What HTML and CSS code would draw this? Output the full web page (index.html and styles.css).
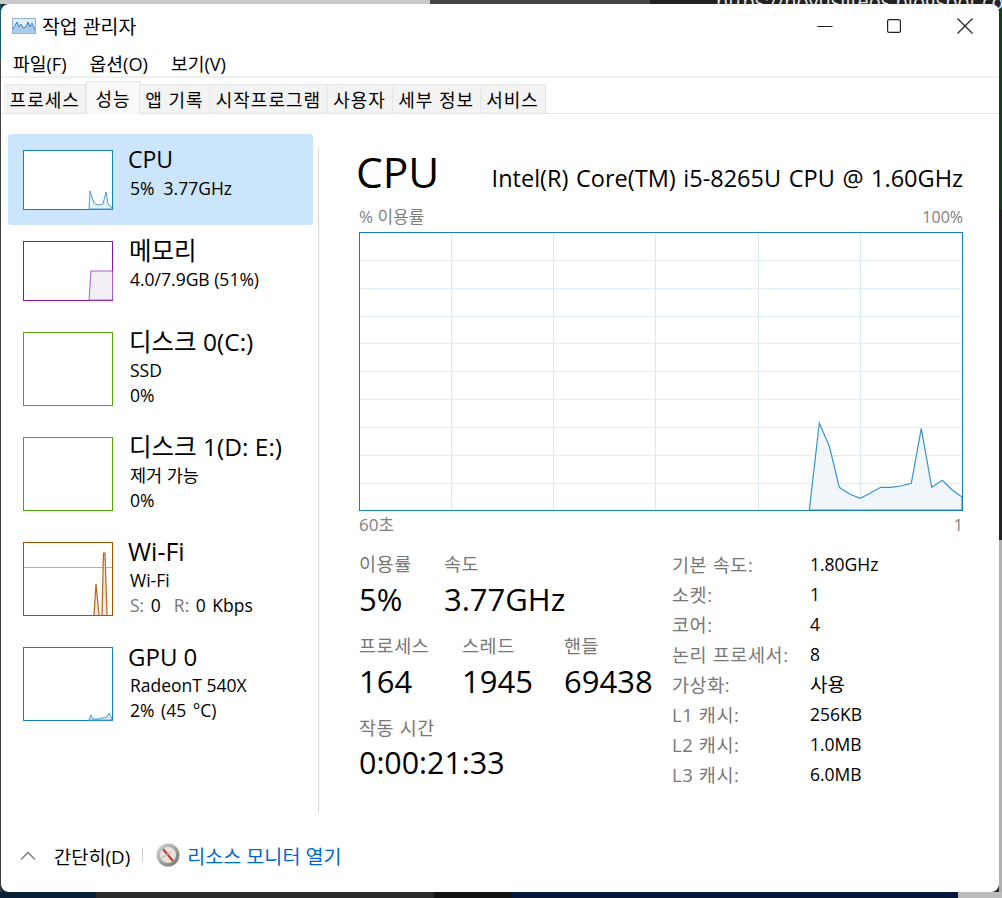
FILE: index.html
```html
<!DOCTYPE html>
<html lang="ko">
<head>
<meta charset="utf-8">
<title>작업 관리자</title>
<link rel="stylesheet" href="styles.css">
</head>
<body>
<div class="desktop">
<span class="behind-url">https://noyusliteos.blogspot.co</span>
<div class="window">
  <header class="titlebar">
    <svg class="app-icon" width="24" height="16" viewBox="0 0 24 16"><rect x="0.5" y="0.5" width="23" height="15" fill="#e4eef8" stroke="#8fb4d8"/><path d="M1 15V11L5 4L7 9L9 6L11 10L14 9L16 4L18 9L20 5L23 12V15H1Z" fill="#a6cdee"/><path d="M1 11L5 4L7 9L9 6L11 10L14 9L16 4L18 9L20 5L23 12" fill="none" stroke="#3f7fbf"/></svg>
    <span class="app-title">작업 관리자</span>
    <div class="win-controls">
      <svg width="16" height="16" viewBox="0 0 16 16"><path d="M0.500 8.500H15.500" stroke="#222" stroke-width="1.200"/></svg>
      <svg class="max-btn" width="14" height="14" viewBox="0 0 14 14"><rect x="0.6" y="0.6" width="12.800" height="12.800" rx="1.500" fill="none" stroke="#222" stroke-width="1.200"/></svg>
      <svg width="16" height="16" viewBox="0 0 16 16"><path d="M0.500 0.500L15.500 15.500M15.500 0.500L0.500 15.500" stroke="#222" stroke-width="1.200"/></svg>
    </div>
  </header>
  <nav class="menubar"><span>파일(F)</span><span>옵션(O)</span><span>보기(V)</span></nav>
  <nav class="tabs">
    <span class="tab">프로세스</span><span class="tab active">성능</span><span class="tab">앱 기록</span><span class="tab">시작프로그램</span><span class="tab">사용자</span><span class="tab">세부 정보</span><span class="tab">서비스</span>
  </nav>
  <main class="main">
    <aside class="sidebar">
      <div class="item selected">
        <svg class="thumb short" viewBox="0 0 90 60"><rect x="0.5" y="0.5" width="89" height="59" fill="#fff" stroke="#117dbb"/><path d="M66 59L67 41L71 53L75 55L80 54L83 42L85 54L89 58V59Z" fill="#e6f1f8" stroke="#4a9ccf"/></svg>
        <div class="info"><div class="name latin cpu-name">CPU</div><div class="sub">5%&nbsp; 3.77GHz</div></div>
      </div>
      <div class="item">
        <svg class="thumb short" viewBox="0 0 90 60"><rect x="0.5" y="0.5" width="89" height="59" fill="#fff" stroke="#8b12ae"/><path d="M66 59L68 30H89.500V59Z" fill="#f2f0f4" stroke="#a85cc4"/></svg>
        <div class="info"><div class="name">메모리</div><div class="sub">4.0/7.9GB (51%)</div></div>
      </div>
      <div class="item tall">
        <svg class="thumb" viewBox="0 0 90 74"><rect x="0.5" y="0.5" width="89" height="73" fill="#fff" stroke="#4da60c"/></svg>
        <div class="info"><div class="name">디스크 0(C:)</div><div class="sub">SSD</div><div class="sub">0%</div></div>
      </div>
      <div class="item tall">
        <svg class="thumb" viewBox="0 0 90 74"><rect x="0.5" y="0.5" width="89" height="73" fill="#fff" stroke="#4da60c"/></svg>
        <div class="info"><div class="name">디스크 1(D: E:)</div><div class="sub">제거 가능</div><div class="sub">0%</div></div>
      </div>
      <div class="item tall">
        <svg class="thumb" viewBox="0 0 90 74"><rect x="0.5" y="0.5" width="89" height="73" fill="#fff" stroke="#a74f01"/><path d="M1 25.500H89" stroke="#d8a878"/><path d="M71 73L73 42L76 73M79 73L80.500 11L82 11L84 73" fill="#f9e8da" stroke="#b5651d" stroke-width="1.200"/></svg>
        <div class="info"><div class="name latin">Wi-Fi</div><div class="sub">Wi-Fi</div><div class="sub spaced"><span class="dim">S:</span> 0&nbsp; <span class="dim">R:</span> 0 Kbps</div></div>
      </div>
      <div class="item tall">
        <svg class="thumb" viewBox="0 0 90 74"><rect x="0.5" y="0.5" width="89" height="73" fill="#fff" stroke="#117dbb"/><path d="M66 73L68 68L70 72H76L78 71H81L84 70L86 66L88 70L89 73Z" fill="#e6f1f8" stroke="#4a9ccf"/></svg>
        <div class="info"><div class="name latin gpu-name">GPU 0</div><div class="sub">RadeonT 540X</div><div class="sub spaced">2% (45 °C)</div></div>
      </div>
    </aside>
    <section class="detail">
      <div class="heading"><h1>CPU</h1><div class="model">Intel(R) Core(TM) i5-8265U CPU @ 1.60GHz</div></div>
      <div class="axis top"><span class="axis-ko">% 이용률</span><span>100%</span></div>
      <svg class="graph" width="604" height="279" viewBox="0 0 604 279">
        <rect x="0" y="0" width="604" height="279" fill="#fff"/>
        <path d="M1 28.500H603M1 56.500H603M1 84.500H603M1 111.500H603M1 139.500H603M1 167.500H603M1 195.500H603M1 223.500H603M1 251.500H603" stroke="#e3ecf2"/>
        <path d="M92.500 1V278M194.500 1V278M296.500 1V278M399.500 1V278M501.500 1V278" stroke="#d9e9f3"/>
        <path d="M450.300 278L460.300 191.300L470.300 214L480.300 255.300L491 262.300L501.300 266.300L511 261.300L521.700 255.300L531.700 255.300L541.700 254L552.300 251.300L562.300 196.300L572.700 255.300L583.300 248.300L593.300 258L603 265V278Z" fill="#f1f6fa" stroke="#3a93c9" stroke-width="1.200"/>
        <rect x="0.5" y="0.5" width="603" height="278" fill="none" stroke="#117dbb"/>
      </svg>
      <div class="axis bottom"><span class="axis-ko">60초</span><span>1</span></div>
      <div class="stats">
        <div class="left-stats">
          <div class="stat-row">
            <div class="stat w-use"><label>이용률</label><b>5%</b></div>
            <div class="stat"><label>속도</label><b>3.77GHz</b></div>
          </div>
          <div class="stat-row">
            <div class="stat w-proc"><label>프로세스</label><b>164</b></div>
            <div class="stat w-thr"><label>스레드</label><b>1945</b></div>
            <div class="stat"><label>핸들</label><b>69438</b></div>
          </div>
          <div class="stat-row">
            <div class="stat"><label>작동 시간</label><b class="uptime">0:00:21:33</b></div>
          </div>
        </div>
        <dl class="specs">
          <dt>기본 속도:</dt><dd>1.80GHz</dd>
          <dt>소켓:</dt><dd>1</dd>
          <dt>코어:</dt><dd>4</dd>
          <dt>논리 프로세서:</dt><dd>8</dd>
          <dt>가상화:</dt><dd class="dd-ko">사용</dd>
          <dt>L1 캐시:</dt><dd>256KB</dd>
          <dt>L2 캐시:</dt><dd>1.0MB</dd>
          <dt>L3 캐시:</dt><dd>6.0MB</dd>
        </dl>
      </div>
    </section>
  </main>
  <footer class="footer">
    <svg class="chev" width="16" height="9" viewBox="0 0 16 9"><path d="M1 8.500L8 1.500L15 8.500" fill="none" stroke="#777" stroke-width="1.300"/></svg>
    <span class="less">간단히(D)</span>
    <span class="sep"></span>
    <svg class="monitor" width="24" height="24" viewBox="0 0 24 24"><defs><linearGradient id="r" x1="0" y1="0" x2="1" y2="1"><stop offset="0" stop-color="#d8d8d8"/><stop offset="1" stop-color="#6e6e6e"/></linearGradient></defs><circle cx="12" cy="12" r="11.500" fill="url(#r)"/><circle cx="12" cy="12" r="8" fill="#e9e2da"/><path d="M7 6L12 12L17 18" stroke="#c9362a" stroke-width="2"/><path d="M6 15L15 9" stroke="#bbb" stroke-width="1.500"/></svg>
    <span class="link">리소스 모니터 열기</span>
  </footer>
</div>
</div>
</body>
</html>
```
FILE: styles.css
```css
* { box-sizing: border-box; }
html, body { margin: 0; height: 100%; overflow: hidden; }
body { font-family: "Open Sans", "Noto Sans CJK KR", sans-serif; color: #000; background: #1c2a33; }
.desktop { position: relative; width: 1002px; height: 898px; padding: 4px 3px 6px 1px; overflow: hidden;
  background:
    linear-gradient(90deg, #c9c9c9 0 430px, #444 430px 650px, #222 650px) top / 100% 4px no-repeat,
    linear-gradient(90deg, #0a2036 0 96px, #2a2a2a 96px 434px, #111 434px 512px, #05173a 512px 958px, #bbb 958px) bottom / 100% 6px no-repeat,
    linear-gradient(#1a5a66 0 60px, #444 60px 400px, #3a3f45 400px) left / 1px 100% no-repeat,
    linear-gradient(#1d3a1d 0 210px, #222 210px 540px, #b0b0b0 540px) right / 3px 100% no-repeat; }
.behind-url { position: absolute; left: 716px; top: -12px; font-size: 20px; color: #e8e8e8; white-space: nowrap; }
.window { position: relative; width: 998px; height: 888px; background: #fff; border-radius: 8px; display: flex; flex-direction: column; overflow: hidden; }
.titlebar { height: 45px; display: flex; align-items: center; padding: 0 0 2px 11px; flex: none; }
.app-icon { margin-right: 6px; }
.app-title { font-size: 19.400px; }
.win-controls { margin-left: auto; display: flex; align-items: center; gap: 54px; padding-right: 26px; }
.max-btn { margin-right: 2px; }
.menubar { height: 29px; display: flex; gap: 23px; align-items: center; padding-left: 12px; font-size: 18.200px; border-bottom: 2px solid #f0f0f0; flex: none; }
.tabs { height: 36px; display: flex; align-items: flex-end; padding-left: 3px; border-bottom: 1px solid #e5e5e5; flex: none; font-size: 18px; letter-spacing: 1px; }
.tab { height: 29px; padding: 0 5.600px; display: flex; align-items: center; background: #f3f3f3; border: 1px solid #e6e6e6; border-bottom: 0; border-left: 0; white-space: nowrap; }
.tab.active { height: 33px; padding: 0 8px; background: #f9f9f9; margin-bottom: -1px; border-left: 1px solid #e6e6e6; }
.main { flex: 1; display: flex; min-height: 0; }
.sidebar { width: 317px; padding: 20px 0 0 7px; flex: none; }
.item { width: 305px; height: 91px; padding: 16px 0 0 15px; display: flex; gap: 15px; border-radius: 3px; }
.item.tall { height: 105px; }
.item.selected { background: #cbe6fc; }
.thumb { width: 90px; height: 74px; flex: none; }
.thumb.short { height: 60px; }
.info { margin-top: -7px; padding-left: 2px; }
.name { font-size: 24.500px; line-height: 33px; white-space: nowrap; margin-left: -1px; }
.latin { margin-left: -2px; font-size: 25px; }
.cpu-name { font-size: 23px; }
.gpu-name { font-size: 24px; }
.sub { font-size: 17.5px; line-height: 25px; white-space: nowrap; }
.spaced { word-spacing: 2px; }
.dim { color: #777; }
.detail { margin: 35px 0 0 0; border-left: 1px solid #d9d9d9; flex: 1; padding: 0 37px 0 38px; height: 664px; }
.heading { display: flex; justify-content: space-between; align-items: center; height: 46px; }
h1 { margin: 0 0 0 -1px; font-size: 42.5px; font-weight: 400; line-height: 46px; }
.model { font-size: 23.5px; word-spacing: 1.500px; white-space: nowrap; margin-top: 12px; }
.axis { display: flex; justify-content: space-between; width: 604px; margin-left: 2px; font-size: 16px; color: #808080; line-height: 20px; }
.axis-ko { font-size: 17px; }
.axis.top { margin-top: 12px; margin-bottom: 5px; }
.axis.bottom { margin-top: 4px; }
.graph { display: block; margin-left: 2px; }
.stats { display: flex; margin-top: 15px; margin-left: 2px; }
.left-stats { width: 313px; flex: none; }
.stat-row { display: flex; height: 82px; }
.stat { display: flex; flex-direction: column; }
.stat label { font-size: 18.500px; color: #777; line-height: 28px; letter-spacing: 0.6px; }
.stat b { font-weight: 400; font-size: 31px; line-height: 42px; white-space: nowrap; }
.stat b.uptime { font-size: 30.400px; }
.w-use { width: 85px; }
.w-proc { width: 103px; }
.w-thr { width: 102px; }
.specs { margin: -1px 0 0; display: grid; grid-template-columns: 138px auto; grid-auto-rows: 30px; font-size: 17.5px; align-items: center; }
.specs dt { color: #777; white-space: nowrap; font-size: 18.500px; letter-spacing: 0.6px; }
.specs dd { margin: 0; white-space: nowrap; }
.specs .dd-ko { font-size: 19px; }
.footer { height: 70px; flex: none; display: flex; align-items: center; padding: 0 0 4px 19px; font-size: 18.700px; }
.less { margin-left: 18px; }
.sep { width: 1px; height: 14px; background: #c8c8c8; margin: 0 13px 0 12px; }
.monitor { margin-right: 7px; }
.link { color: #0066cc; font-size: 19.600px; }
```
